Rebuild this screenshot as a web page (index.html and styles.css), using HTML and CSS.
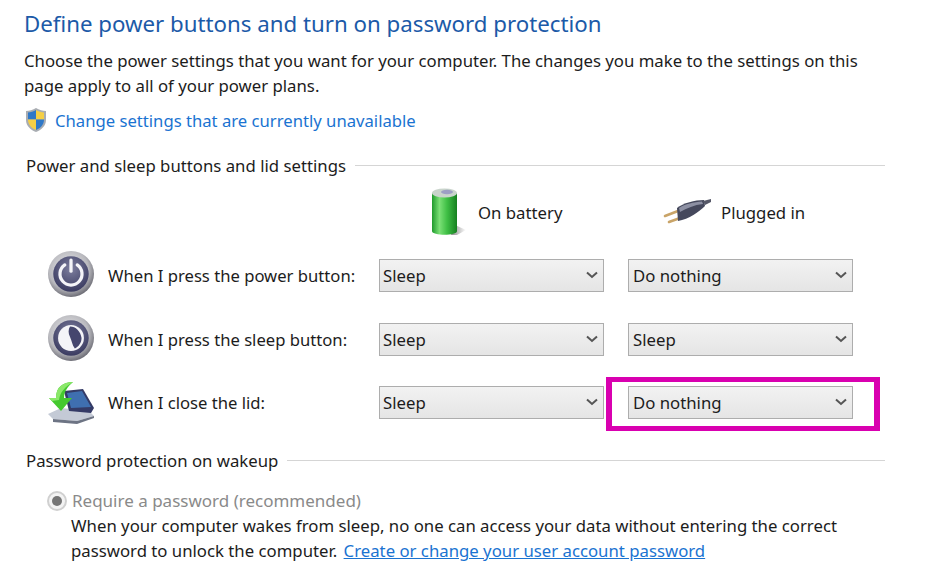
FILE: index.html
```html
<!DOCTYPE html>
<html lang="en">
<head>
    <meta charset="UTF-8">
    <meta name="viewport" content="width=device-width, initial-scale=1.0">
    <title>System Settings</title>
    <link rel="stylesheet" href="styles.css">
</head>
<body>
    <svg class="defs" width="0" height="0">
        <defs>
            <radialGradient id="ringFill" cx="45%" cy="40%" r="60%">
                <stop offset="0" stop-color="#f0f0f2"/>
                <stop offset="0.72" stop-color="#b9b9be"/>
                <stop offset="1" stop-color="#6f6f78"/>
            </radialGradient>
            <radialGradient id="discFill" cx="50%" cy="35%" r="70%">
                <stop offset="0" stop-color="#7d7e9e"/>
                <stop offset="1" stop-color="#35365c"/>
            </radialGradient>
            <linearGradient id="cellFill" x1="0" x2="1" y1="0" y2="0">
                <stop offset="0" stop-color="#1f9a2c"/>
                <stop offset="0.3" stop-color="#7be076"/>
                <stop offset="0.6" stop-color="#3fbf45"/>
                <stop offset="1" stop-color="#15801f"/>
            </linearGradient>
            <linearGradient id="cellShadow" x1="0" x2="1" y1="0" y2="0">
                <stop offset="0" stop-color="#8a8a8a"/>
                <stop offset="1" stop-color="#ffffff"/>
            </linearGradient>
        </defs>
    </svg>

    <div class="page">
        <h1>Define power buttons and turn on password protection</h1>
        <p class="intro">Choose the power settings that you want for your computer. The changes you make to the settings on this page apply to all of your power plans.</p>

        <div class="change-link">
            <svg class="shield" width="24" height="26" viewBox="0 0 24 26">
                <path d="M12 1 C9 3 5 4 2 4 L2 13 C2 19 7 23 12 25 C17 23 22 19 22 13 L22 4 C19 4 15 3 12 1 Z" fill="#a9adb2"/>
                <path d="M12 3 C9.500 4.500 6.500 5.500 4 5.600 L4 12.500 L12 12.500 Z" fill="#2f78c8"/>
                <path d="M12 3 C14.500 4.500 17.500 5.500 20 5.600 L20 12.500 L12 12.500 Z" fill="#f5cf45"/>
                <path d="M4 12.500 L12 12.500 L12 23 C8 21.500 4 18 4 12.500 Z" fill="#f5cf45"/>
                <path d="M20 12.500 L12 12.500 L12 23 C16 21.500 20 18 20 12.500 Z" fill="#2f78c8"/>
            </svg>
            <a href="#">Change settings that are currently unavailable</a>
        </div>

        <div class="group-title"><span>Power and sleep buttons and lid settings</span></div>

        <div class="power-grid">
            <div class="col-head col-battery">
                <svg width="40" height="50" viewBox="0 0 40 50">
                    <path d="M24 38 L35 43 L26 48 L20 48 Z" fill="url(#cellShadow)"/>
                    <path d="M1 6 L1 44 C1 49 26 49 26 44 L26 6 Z" fill="url(#cellFill)"/>
                    <ellipse cx="13.500" cy="6" rx="12.500" ry="4.500" fill="#c9d4cb"/>
                    <ellipse cx="16" cy="5" rx="6" ry="2.200" fill="#9d9fc4"/>
                </svg>
                <span>On battery</span>
            </div>
            <div class="col-head col-plug">
                <svg width="50" height="28" viewBox="0 0 50 28">
                    <path d="M2 18 L15 13 M6 24 L17 20" stroke="#c9a468" stroke-width="2.600" stroke-linecap="round"/>
                    <path d="M14 10 C20 5 32 2 41 2 L42 8 C36 14 26 21 15 23 Z" fill="#45485c"/>
                    <path d="M16 10 C22 6 31 4 39 3.500 L40 6 C31 7 24 10 17 14 Z" fill="#8d90a3"/>
                    <path d="M40 3 L48 1 L48 4 L42 7 Z" fill="#565868"/>
                </svg>
                <span>Plugged in</span>
            </div>

            <svg class="row-icon row-disc" width="46" height="46" viewBox="0 0 48 48">
                <circle cx="24" cy="24" r="24" fill="url(#ringFill)"/>
                <circle cx="24" cy="24" r="18.500" fill="url(#discFill)"/>
                <path d="M17.500 14.500 A11.500 11.500 0 1 0 30.500 14.500" fill="none" stroke="#f4f4f8" stroke-width="3.400" stroke-linecap="round"/>
                <path d="M24 9.500 L24 21" stroke="#f4f4f8" stroke-width="3.400" stroke-linecap="round"/>
            </svg>
            <div class="row-label">When I press the power button:</div>
            <div class="dropdown"><span>Sleep</span><svg class="chev" width="12" height="8" viewBox="0 0 12 8"><path d="M1 1.500 L6 6 L11 1.500" fill="none" stroke="#555" stroke-width="2"/></svg></div>
            <div class="dropdown"><span>Do nothing</span><svg class="chev" width="12" height="8" viewBox="0 0 12 8"><path d="M1 1.500 L6 6 L11 1.500" fill="none" stroke="#555" stroke-width="2"/></svg></div>

            <svg class="row-icon row-disc" width="46" height="46" viewBox="0 0 48 48">
                <circle cx="24" cy="24" r="24" fill="url(#ringFill)"/>
                <circle cx="24" cy="24" r="18.500" fill="url(#discFill)"/>
                <circle cx="24" cy="24" r="13.500" fill="#f4f4f8"/>
                <path d="M23 12 C29 12 34 17 35 24 C35 29 32 33 28 35 C25 31 25 27 23 23 C21 19 21 15 23 12 Z" fill="#45466e"/>
            </svg>
            <div class="row-label">When I press the sleep button:</div>
            <div class="dropdown"><span>Sleep</span><svg class="chev" width="12" height="8" viewBox="0 0 12 8"><path d="M1 1.500 L6 6 L11 1.500" fill="none" stroke="#555" stroke-width="2"/></svg></div>
            <div class="dropdown"><span>Sleep</span><svg class="chev" width="12" height="8" viewBox="0 0 12 8"><path d="M1 1.500 L6 6 L11 1.500" fill="none" stroke="#555" stroke-width="2"/></svg></div>

            <svg class="row-icon" width="48" height="48" viewBox="0 0 48 48">
                <path d="M1 36 L14 30 L42 33 L47 38 L30 43 L6 41 Z" fill="#c4cad6"/>
                <path d="M6 41 L30 43 L47 38 L47 40 L30 46 L6 44 Z" fill="#6d7484"/>
                <path d="M17 13 L36 11 L47 30 L44 35 L22 33 Z" fill="#343a66"/>
                <path d="M20 15 L35 13 L44 29 L24 30 Z" fill="#3f6fb0"/>
                <path d="M26 4 C16 4 9 9 9 20 L2 20 L14 33 L25 20 L17 20 C17 14 20 9 26 4 Z" fill="#45c92f"/>
                <path d="M26 4 C16 4 9 9 9 20 L2 20 L5 23 L12 22 C13 14 18 9 26 4 Z" fill="#8be86a"/>
            </svg>
            <div class="row-label">When I close the lid:</div>
            <div class="dropdown"><span>Sleep</span><svg class="chev" width="12" height="8" viewBox="0 0 12 8"><path d="M1 1.500 L6 6 L11 1.500" fill="none" stroke="#555" stroke-width="2"/></svg></div>
            <div class="dropdown marked"><span>Do nothing</span><svg class="chev" width="12" height="8" viewBox="0 0 12 8"><path d="M1 1.500 L6 6 L11 1.500" fill="none" stroke="#555" stroke-width="2"/></svg></div>
        </div>

        <div class="group-title group-password"><span>Password protection on wakeup</span></div>

        <div class="password-block">
            <div class="radio-row">
                <span class="radio"></span>
                <span>Require a password (recommended)</span>
            </div>
            <p>When your computer wakes from sleep, no one can access your data without entering the correct password to unlock the computer. <a href="#">Create or change your user account password</a></p>
        </div>
    </div>
</body>
</html>
```

FILE: styles.css
```css
* {
    box-sizing: border-box;
}
html, body {
    margin: 0;
    height: 575px;
    overflow: hidden;
}
body {
    font-family: "Noto Sans", "Open Sans", Arial, sans-serif;
    font-size: 16.750px;
    line-height: 25px;
    color: #1c1c1c;
    background-color: #fff;
}
.defs {
    position: absolute;
}
.page {
    width: 861px;
    margin-left: 24px;
    padding-top: 8px;
}
h1 {
    margin: 0;
    font-size: 22.270px;
    line-height: 31px;
    font-weight: 400;
    color: #1c5aa8;
}
.intro {
    margin: 9px 0 0;
    width: 850px;
}
a {
    color: #1a73d1;
    text-decoration: none;
}
.change-link {
    display: flex;
    align-items: center;
    gap: 7px;
    margin-top: 9px;
    font-size: 16.670px;
}
.shield {
    flex: none;
}
.group-title {
    display: flex;
    align-items: center;
    gap: 9px;
    margin: 20px 0 0 2px;
}
.group-title::after {
    content: "";
    flex: 1;
    height: 1px;
    background-color: #d5d5d5;
}
.power-grid {
    display: grid;
    grid-template-columns: 48px 284px 225px 225px;
    grid-template-rows: 64px 64px 64px 62px;
    align-items: center;
    margin: 1px 0 0 23px;
}
.col-head {
    display: flex;
    align-items: center;
    height: 50px;
    margin-top: 2px;
}
.col-battery {
    grid-column: 3;
    margin-left: 52px;
    gap: 7px;
}
.col-plug {
    grid-column: 4;
    margin-left: 59px;
    gap: 8px;
}
.col-plug svg {
    flex: none;
}
.row-icon {
    grid-column: 1;
}
.row-disc {
    margin: 0 0 3px 1px;
}
.row-label {
    grid-column: 2;
    padding-left: 13px;
    font-size: 16.650px;
    white-space: nowrap;
}
.dropdown {
    position: relative;
    display: flex;
    align-items: center;
    justify-content: space-between;
    width: 225px;
    height: 33px;
    padding: 0 5px 0 3px;
    border: 1px solid #adadad;
    background: linear-gradient(#f2f2f2, #e5e5e5);
}
.row-label + .dropdown + .dropdown {
    margin-left: 24px;
    padding-left: 4px;
}
.marked::after {
    content: "";
    position: absolute;
    left: -23px;
    top: -10px;
    width: 262px;
    height: 44px;
    border: solid #d900b0;
    border-width: 5px 6px;
}
.group-password {
    margin-top: 15px;
}
.password-block {
    margin: 15px 0 0 23px;
}
.password-block p {
    margin: 0;
    width: 800px;
    padding-left: 24px;
}
.password-block a {
    text-decoration: underline;
    margin-left: 2px;
}
.radio-row {
    display: flex;
    align-items: center;
    gap: 5px;
    font-size: 17px;
    color: #8a8a8a;
}
.radio {
    position: relative;
    width: 20px;
    height: 20px;
    border-radius: 50%;
    border: 2px solid #d0d0d0;
    background-color: #f3f3f3;
}
.radio::after {
    content: "";
    position: absolute;
    left: 3px;
    top: 3px;
    width: 10px;
    height: 10px;
    border-radius: 50%;
    background-color: #757575;
}
```
